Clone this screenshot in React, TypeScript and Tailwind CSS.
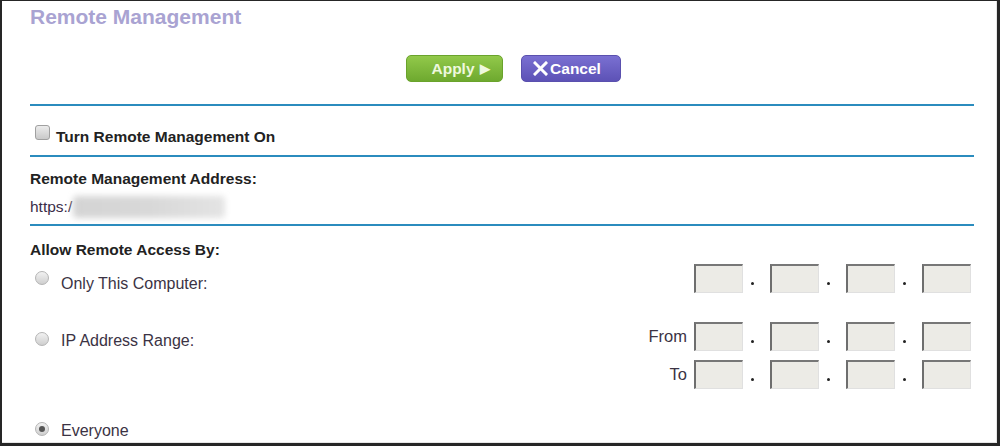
import { ReactNode } from 'react';

const font = { fontFamily: '"Liberation Sans", Arial, sans-serif' };

function IpBox() {
    return (
        <div className="w-[49px] h-[29px] bg-[#ecebe6] border-t-2 border-l-2 border-r border-b border-t-[#777] border-l-[#6e6e6e] border-r-[#e0e0e0] border-b-[#e0e0e0]" />
    );
}

function IpRow({ label }: { label?: string }) {
    return (
        <div className="flex items-center">
            {label && <span className="mr-[7px] text-[16.5px] text-[#3b3344]">{label}</span>}
            {[0, 1, 2, 3].map((i) => (
                <div key={i} className="flex items-end">
                    {i > 0 && (
                        <span className="w-[27px] h-[29px] flex items-center pl-[8px] pt-[9px]">
                            <span className="w-[3px] h-[3px] bg-[#222] rounded-full" />
                        </span>
                    )}
                    <IpBox />
                </div>
            ))}
        </div>
    );
}

function Radio({ checked = false }: { checked?: boolean }) {
    return (
        <span className="w-[14px] h-[14px] rounded-full border border-[#b4b4b4] bg-gradient-to-b from-[#f2f2f2] to-[#cfcfcf] flex items-center justify-center shrink-0">
            {checked && <span className="w-[6px] h-[6px] rounded-full bg-[#555]" />}
        </span>
    );
}

function Divider() {
    return <div className="h-[2px] bg-[#2b8cbe] mr-[22px]" />;
}

function Option({ checked, textClass = '', children }: { checked?: boolean; textClass?: string; children: ReactNode }) {
    return (
        <div className="flex items-start gap-[12px] pl-[5px] text-[16px] leading-[18px] text-[#3b3344]">
            <Radio checked={checked} />
            <span className={textClass}>{children}</span>
        </div>
    );
}

export default function App() {
    return (
        <div
            style={font}
            className="w-[1000px] h-[446px] bg-white border-[#262626] border-l-2 border-t border-r-[3px] border-b-[3px] overflow-hidden"
        >
            <div className="h-full border-r border-b border-[#e6e6e6] pl-[28px]">
                {/* Title */}
                <h1 className="pt-[4px] text-[21px] leading-[24px] font-bold text-[#a9a3d2]">Remote Management</h1>

                {/* Buttons */}
                <div className="mt-[26px] flex gap-[18px] pl-[376px]">
                    <button className="w-[97px] h-[27px] rounded-[5px] bg-gradient-to-b from-[#92c94a] to-[#6ea92f] border border-[#6aa32c] text-[#eef8de] text-[15.5px] font-bold flex items-center justify-center gap-[5px] pl-[12px]">
                        Apply
                        <span className="text-[13px] leading-none">&#9654;</span>
                    </button>
                    <button className="w-[100px] h-[27px] rounded-[5px] bg-gradient-to-b from-[#7a70d2] to-[#5d52b6] border border-[#5a50ae] text-white text-[15.5px] font-bold flex items-center justify-center gap-[2px] pr-[8px]">
                        <svg width="15" height="15" viewBox="0 0 15 15">
                            <path d="M2 2 L13 13 M13 2 L2 13" stroke="white" strokeWidth="3" strokeLinecap="square" />
                        </svg>
                        Cancel
                    </button>
                </div>

                <div className="mt-[22px]">
                    <Divider />
                </div>

                {/* Turn on */}
                <div className="h-[49px] flex items-start gap-[6px] pl-[5px]">
                    <span className="mt-[19px] w-[15px] h-[15px] rounded-[3px] border border-[#a0a0a0] bg-gradient-to-b from-[#ececec] to-[#c9c9c9] shrink-0" />
                    <span className="mt-[22px] text-[15.5px] leading-[18px] font-bold text-[#222]">Turn Remote Management On</span>
                </div>

                <Divider />

                {/* Address */}
                <div className="pt-[13px] text-[15.5px] leading-[18px] font-bold text-[#222]">Remote Management Address:</div>
                <div className="mt-[8px] flex items-center text-[15.5px] leading-[18px] text-[#3a2d48]">
                    <span>https:/</span>
                    <span className="ml-[1px] w-[152px] h-[22px] bg-gradient-to-r from-[#d4d4d4] via-[#d8d8d8] to-[#e4e4e4] blur-[3px] rounded-[4px]" />
                </div>

                <div className="mt-[6px]">
                    <Divider />
                </div>

                {/* Access */}
                <div className="mt-[15px] text-[15.5px] leading-[18px] font-bold text-[#222]">Allow Remote Access By:</div>

                <div className="mt-[5px] flex items-start justify-between pr-[25px]">
                    <div className="pt-[7px]">
                        <Option textClass="mt-[4px]">Only This Computer:</Option>
                    </div>
                    <IpRow />
                </div>

                <div className="mt-[29px] flex items-start justify-between pr-[25px]">
                    <div className="pt-[10px]">
                        <Option>IP Address Range:</Option>
                    </div>
                    <div className="flex flex-col items-end gap-[9px]">
                        <IpRow label="From" />
                        <IpRow label="To" />
                    </div>
                </div>

                <div className="mt-[33px]">
                    <Option checked>Everyone</Option>
                </div>
            </div>
        </div>
    );
}
